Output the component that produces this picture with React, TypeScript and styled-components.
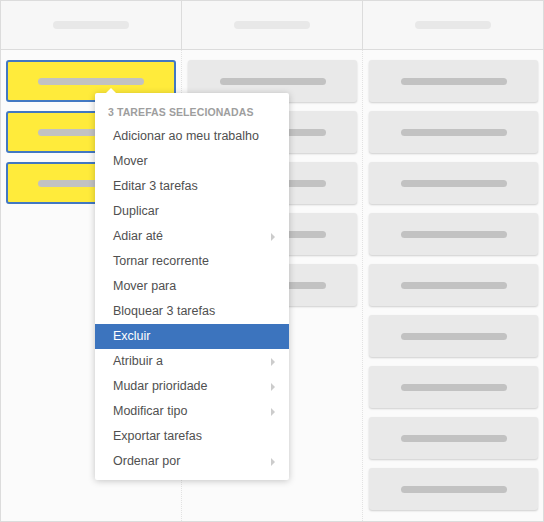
import styled, { createGlobalStyle } from "styled-components";

const GlobalStyle = createGlobalStyle`
  html, body {
    margin: 0;
    padding: 0;
    background: #ffffff;
  }
  body {
    font-family: "Liberation Sans", Arial, sans-serif;
  }
`;

type Column = { selected: boolean; count: number };

const columns: Column[] = [
  { selected: true, count: 3 },
  { selected: false, count: 5 },
  { selected: false, count: 9 },
];

type MenuEntry = { label: string; submenu?: boolean; active?: boolean };

const menuItems: MenuEntry[] = [
  { label: "Adicionar ao meu trabalho" },
  { label: "Mover" },
  { label: "Editar 3 tarefas" },
  { label: "Duplicar" },
  { label: "Adiar até", submenu: true },
  { label: "Tornar recorrente" },
  { label: "Mover para" },
  { label: "Bloquear 3 tarefas" },
  { label: "Excluir", active: true },
  { label: "Atribuir a", submenu: true },
  { label: "Mudar prioridade", submenu: true },
  { label: "Modificar tipo", submenu: true },
  { label: "Exportar tarefas" },
  { label: "Ordenar por", submenu: true },
];

export default function App() {
  return (
    <>
      <GlobalStyle />
      <Board>
        <HeaderRow>
          {columns.map((_, i) => (
            <HeaderCell key={i}>
              <HeaderPill />
            </HeaderCell>
          ))}
        </HeaderRow>
        <BodyRow>
          {columns.map((col, i) => (
            <Lane key={i}>
              {Array.from({ length: col.count }).map((_, j) => (
                <Card key={j} $selected={col.selected}>
                  <CardBar />
                </Card>
              ))}
            </Lane>
          ))}
        </BodyRow>

        <Menu>
          <MenuTitle>3 tarefas selecionadas</MenuTitle>
          {menuItems.map((item) => (
            <MenuItem key={item.label} $active={item.active}>
              {item.label}
              {item.submenu && <SubArrow />}
            </MenuItem>
          ))}
        </Menu>
      </Board>
    </>
  );
}

const Board = styled.div`
  position: relative;
  box-sizing: border-box;
  width: 544px;
  height: 522px;
  border: 1px solid #dcdcdc;
  background: #fbfbfb;
  display: flex;
  flex-direction: column;
  overflow: hidden;
`;

const HeaderRow = styled.div`
  display: grid;
  grid-template-columns: 180px 181px 1fr;
  height: 48px;
  border-bottom: 1px solid #dcdcdc;
  background: #f7f7f7;
`;

const HeaderCell = styled.div`
  display: flex;
  align-items: center;
  justify-content: center;
  & + & {
    border-left: 1px solid #dcdcdc;
  }
`;

const HeaderPill = styled.div`
  width: 76px;
  height: 8px;
  border-radius: 4px;
  background: #e8e8e8;
`;

const BodyRow = styled.div`
  flex: 1;
  display: grid;
  grid-template-columns: 180px 181px 1fr;
`;

const Lane = styled.div`
  display: flex;
  flex-direction: column;
  gap: 9px;
  padding: 10px 5px 0 5px;
  & + & {
    border-left: 1px dotted #e2e2e2;
    padding-left: 6px;
  }
`;

const Card = styled.div<{ $selected: boolean }>`
  box-sizing: border-box;
  height: 42px;
  border-radius: 3px;
  display: flex;
  align-items: center;
  justify-content: center;
  background: ${(p) => (p.$selected ? "#ffeb3b" : "#e9e9e9")};
  border: ${(p) => (p.$selected ? "2px solid #4278c2" : "none")};
  box-shadow: ${(p) =>
    p.$selected ? "none" : "0 1px 2px rgba(0, 0, 0, 0.18)"};
`;

const CardBar = styled.div`
  width: 106px;
  height: 7px;
  border-radius: 4px;
  background: #c2c2c2;
`;

const Menu = styled.div`
  position: absolute;
  left: 94px;
  top: 92px;
  width: 194px;
  box-sizing: border-box;
  padding: 8px 0 6px;
  background: #ffffff;
  box-shadow: 0 1px 7px rgba(0, 0, 0, 0.22);
  border-radius: 2px;

  &::before {
    content: "";
    position: absolute;
    top: -5px;
    left: 11px;
    border-left: 5px solid transparent;
    border-right: 5px solid transparent;
    border-bottom: 5px solid #ffffff;
  }
`;

const MenuTitle = styled.div`
  height: 23px;
  line-height: 23px;
  padding-left: 13px;
  font-size: 10.5px;
  font-weight: bold;
  text-transform: uppercase;
  letter-spacing: 0.1px;
  color: #9e9e9e;
`;

const MenuItem = styled.div<{ $active?: boolean }>`
  position: relative;
  height: 25px;
  line-height: 25px;
  padding-left: 18px;
  font-size: 12.5px;
  color: ${(p) => (p.$active ? "#ffffff" : "#505050")};
  background: ${(p) => (p.$active ? "#3c74be" : "transparent")};
`;

const SubArrow = styled.span`
  position: absolute;
  right: 14px;
  top: 9px;
  border-top: 4px solid transparent;
  border-bottom: 4px solid transparent;
  border-left: 4px solid #cccccc;
`;
